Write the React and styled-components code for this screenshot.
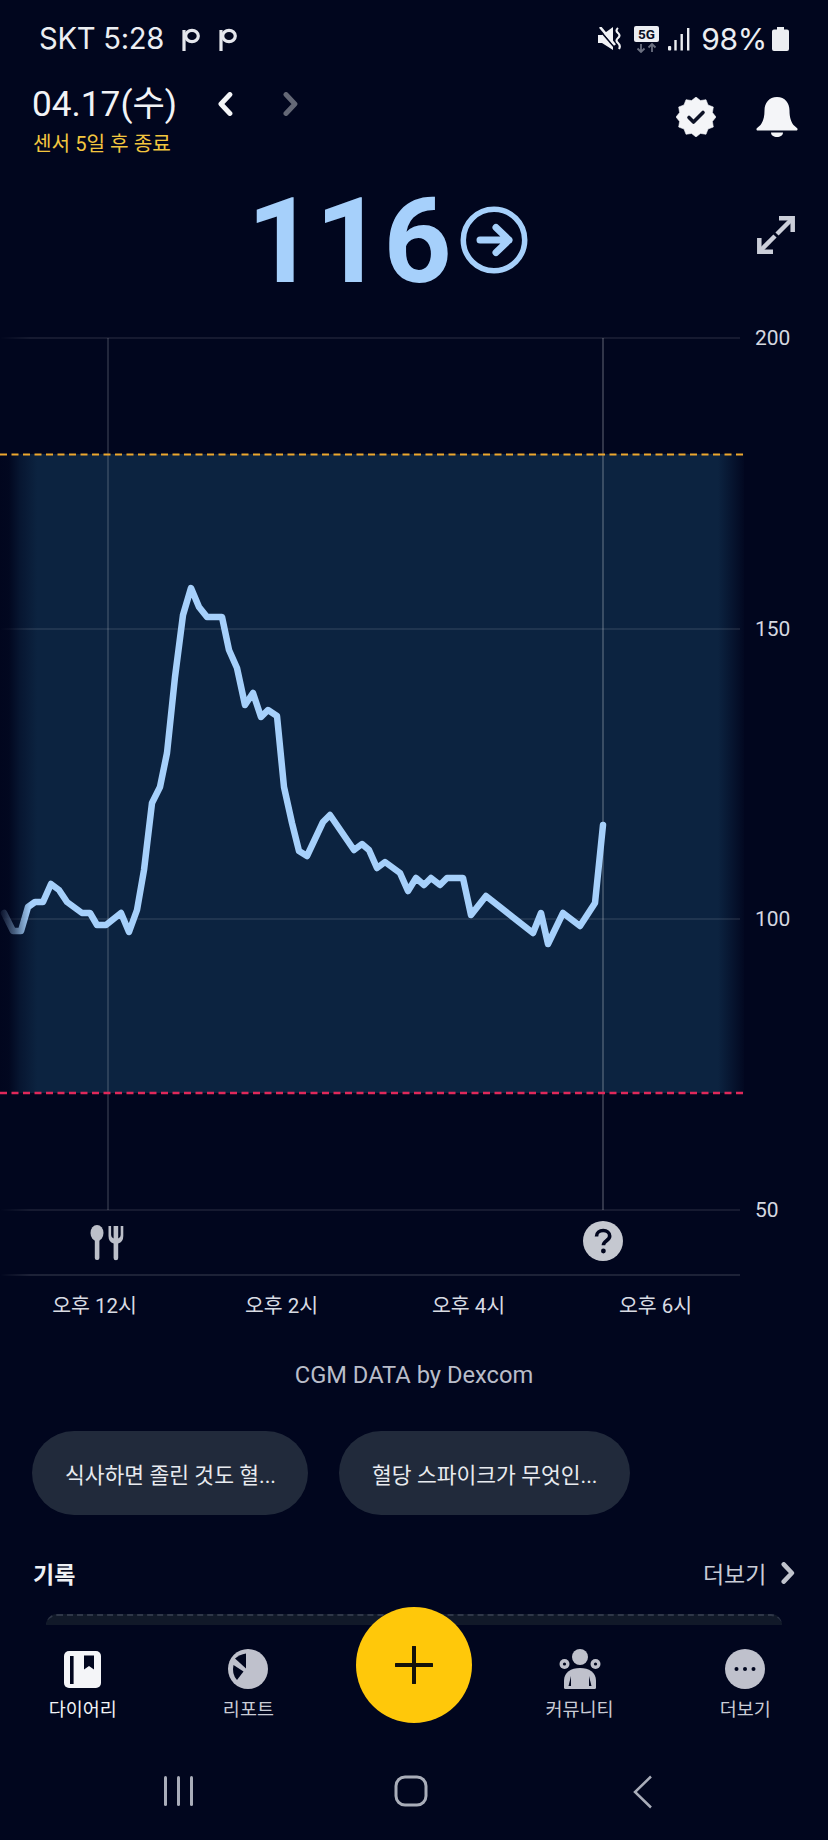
import React from "react";
import styled, { createGlobalStyle } from "styled-components";

const BG = "#01061e";
const BLUE = "#a6d0fb";

const Global = createGlobalStyle`
  html, body { margin: 0; padding: 0; background: ${BG}; }
  body { font-family: Roboto, "Noto Sans CJK KR", sans-serif; }
  * { box-sizing: border-box; }
`;

const Page = styled.div`
  width: 828px;
  height: 1840px;
  overflow: hidden;
  background: ${BG};
  display: flex;
  flex-direction: column;
`;

const StatusBar = styled.div`
  height: 78px;
  padding: 0 39px 0 39px;
  display: flex;
  align-items: center;
  justify-content: space-between;
  color: #eceef2;
  flex: none;
`;
const StatusLeft = styled.div`
  display: flex;
  align-items: center;
  gap: 18px;
`;
const StatusText = styled.span`
  font-family: Inter, sans-serif;
  font-size: ${(p) => p.$size || 29.2}px;
  letter-spacing: -0.3px;
  line-height: 40px;
`;
const StatusRight = styled.div`
  display: flex;
  align-items: center;
`;
const StatusItem = styled.div`
  display: flex;
  margin-left: ${(p) => p.$gap}px;
`;
const NotifyGroup = styled.div`
  display: flex;
  gap: 19px;
  align-items: center;
`;

const Header = styled.header`
  flex: none;
  display: flex;
  justify-content: space-between;
  padding: 4px 30px 0 32px;
  height: 83px;
`;
const DateBlock = styled.div`
  display: flex;
  flex-direction: column;
`;
const DateRow = styled.div`
  display: flex;
  align-items: center;
  height: 44px;
`;
const DateText = styled.div`
  width: 186px;
  font-size: 35.200px;
  font-weight: 400;
  line-height: 44px;
  color: #f2f3f6;
  white-space: nowrap;
`;
const PagerGroup = styled.div`
  display: flex;
  align-items: center;
  gap: 50px;
`;
const SensorNote = styled.div`
  padding-left: 1px;
  font-size: 20.200px;
  line-height: 36px;
  color: #f3c63f;
  white-space: nowrap;
`;
const HeaderActions = styled.div`
  display: flex;
  gap: 40px;
  padding-top: 15px;
  align-items: flex-start;
`;

const ValueRow = styled.div`
  flex: none;
  height: 156px;
  padding: 0 33px 0 247px;
  display: flex;
  align-items: center;
`;
const Value = styled.div`
  font-size: 119px;
  font-weight: 700;
  line-height: 156px;
  margin-top: 5px;
  color: ${BLUE};
  margin-right: 8px;
`;
const ArrowSlot = styled.div`
  display: flex;
  margin-top: 1px;
`;
const ExpandSlot = styled.div`
  margin-left: auto;
  display: flex;
  margin-top: -8px;
`;

const ChartWrap = styled.div`
  position: relative;
  flex: none;
  height: 968px;
`;
const ChartSvg = styled.svg`
  display: block;
`;
const AxisLabel = styled.span`
  position: absolute;
  left: 755px;
  top: ${(p) => p.$y - 317 - 13}px;
  font-size: 21px;
  line-height: 26px;
  color: #d5d8e0;
`;

const TimeRow = styled.div`
  flex: none;
  height: 40px;
  padding: 1px 0 0 1px;
  display: grid;
  grid-template-columns: repeat(4, 187px);
`;
const TimeLabel = styled.div`
  text-align: center;
  font-size: 20.500px;
  line-height: 40px;
  color: #d8dbe3;
`;

const Credit = styled.div`
  flex: none;
  margin-top: 30px;
  text-align: center;
  font-size: 23.700px;
  line-height: 40px;
  color: #b9bdc9;
`;

const ChipRow = styled.div`
  flex: none;
  display: flex;
  gap: 31px;
  margin-top: 36px;
  padding-left: 32px;
`;
const Chip = styled.div`
  height: 84px;
  border-radius: 42px;
  background: #212a3b;
  padding: 0 32px 0 33px;
  display: flex;
  align-items: center;
  font-size: 21.500px;
  color: #e8eaef;
  white-space: nowrap;
`;

const SectionHead = styled.div`
  flex: none;
  height: 40px;
  margin-top: 38px;
  padding: 0 33px;
  display: flex;
  align-items: center;
  justify-content: space-between;
`;
const SectionTitle = styled.div`
  font-size: 23px;
  font-weight: 700;
  color: #eef0f4;
`;
const MoreLink = styled.div`
  display: flex;
  align-items: center;
  gap: 15px;
  font-size: 23px;
  color: #c9ccd6;
`;

const PeekCard = styled.div`
  flex: none;
  height: 11px;
  margin: 21px 46px 0 46px;
  background: #111929;
  border-top: 2px dashed #2f3748;
  border-radius: 14px 14px 0 0;
`;

const BottomNav = styled.nav`
  position: relative;
  flex: none;
  height: 130px;
  display: grid;
  grid-template-columns: repeat(5, 1fr);
  background: ${BG};
`;
const NavItem = styled.div`
  display: flex;
  flex-direction: column;
  align-items: center;
  padding-top: 24px;
  gap: 9px;
`;
const NavIconBox = styled.div`
  width: 44px;
  height: 40px;
  display: flex;
  align-items: center;
  justify-content: center;
`;
const NavLabel = styled.div`
  font-size: 18.500px;
  line-height: 24px;
  color: ${(p) => (p.$active ? "#f2f3f6" : "#c9ccd6")};
`;
const PlusButton = styled.button`
  position: absolute;
  left: 356px;
  top: -18px;
  width: 116px;
  height: 116px;
  padding: 0;
  border: none;
  border-radius: 50%;
  background: #ffc80a;
  display: flex;
  align-items: center;
  justify-content: center;
`;

const GestureBar = styled.div`
  flex: none;
  height: 85px;
  padding: 20px 7px 0 0;
  display: grid;
  grid-template-columns: repeat(3, 232px);
  justify-content: center;
  justify-items: center;
`;
const GestureIcon = styled.svg`
  display: block;
`;

/* ---------- chart data ---------- */
const points = [
  [4, 913], [13, 931], [21, 931], [28, 907], [35, 902], [43, 902], [51, 884], [59, 890], [67, 902],
  [82, 913], [90, 913], [97, 925], [106, 925], [121, 913], [129, 932], [137, 910], [144, 870],
  [152, 803], [160, 787], [167, 753], [175, 677], [183, 615], [191, 588], [199, 607], [207, 617],
  [222, 617], [229, 650], [237, 668], [245, 705], [253, 693], [261, 717], [268, 710], [277, 716],
  [284, 787], [292, 823], [299, 851], [307, 856], [323, 822], [330, 815], [354, 850], [362, 844],
  [369, 850], [377, 868], [385, 862], [400, 873], [408, 891], [416, 878], [424, 885], [431, 878],
  [440, 885], [447, 878], [463, 878], [471, 915], [486, 896], [533, 933], [541, 913], [548, 944],
  [563, 913], [580, 926], [595, 903], [603, 825],
];

const gridY = [338, 629, 919, 1210];

function badgePoints(cx, cy, outer, inner, n) {
  const pts = [];
  for (let i = 0; i < n * 2; i++) {
    const r = i % 2 ? inner : outer;
    const a = (Math.PI * i) / n - Math.PI / 2;
    pts.push(`${(cx + r * Math.cos(a)).toFixed(2)},${(cy + r * Math.sin(a)).toFixed(2)}`);
  }
  return pts.join(" ");
}

function Chart() {
  return (
    <ChartSvg width="828" height="968" viewBox="0 317 828 968">
      <defs>
        <linearGradient id="band" x1="0" x2="744" y1="0" y2="0" gradientUnits="userSpaceOnUse">
          <stop offset="0" stopColor="#0c2340" stopOpacity="0" />
          <stop offset="0.012" stopColor="#0c2340" stopOpacity="0.05" />
          <stop offset="0.027" stopColor="#0c2340" stopOpacity="0.55" />
          <stop offset="0.05" stopColor="#0c2340" stopOpacity="1" />
          <stop offset="0.965" stopColor="#0c2340" stopOpacity="1" />
          <stop offset="1" stopColor="#0c2340" stopOpacity="0.08" />
        </linearGradient>
        <linearGradient id="lineFade" x1="0" x2="36" y1="0" y2="0" gradientUnits="userSpaceOnUse">
          <stop offset="0" stopColor={BLUE} stopOpacity="0.05" />
          <stop offset="0.4" stopColor={BLUE} stopOpacity="0.42" />
          <stop offset="0.85" stopColor={BLUE} stopOpacity="1" />
        </linearGradient>
        <linearGradient id="gridFade" x1="0" x2="30" y1="0" y2="0" gradientUnits="userSpaceOnUse">
          <stop offset="0" stopColor="#ffffff" stopOpacity="0" />
          <stop offset="1" stopColor="#ffffff" stopOpacity="1" />
        </linearGradient>
      </defs>
      <rect x="0" y="454" width="744" height="639" fill="url(#band)" />
      {gridY.map((y) => (
        <line key={y} x1="0" x2="740" y1={y} y2={y} stroke="url(#gridFade)" strokeOpacity="0.11" strokeWidth="1.5" />
      ))}
      <line x1="0" x2="740" y1="1275" y2="1275" stroke="url(#gridFade)" strokeOpacity="0.15" strokeWidth="1.5" />
      <line x1="108" x2="108" y1="338" y2="1210" stroke="#ffffff" strokeOpacity="0.18" strokeWidth="1.5" />
      <line x1="603" x2="603" y1="338" y2="1210" stroke="#ffffff" strokeOpacity="0.26" strokeWidth="1.5" />
      <line x1="0" x2="744" y1="454.500" y2="454.500" stroke="#eda72e" strokeWidth="2" strokeDasharray="7 4.500" />
      <line x1="0" x2="744" y1="1093" y2="1093" stroke="#e0285a" strokeWidth="2.500" strokeDasharray="7 4.500" />
      <polyline
        points={points.map((p) => p.join(",")).join(" ")}
        fill="none"
        stroke="url(#lineFade)"
        strokeWidth="6.500"
        strokeLinejoin="round"
        strokeLinecap="round"
      />
      {/* meal icon */}
      <g fill="#bcbfc9">
        <ellipse cx="97" cy="1233" rx="6.500" ry="8" />
        <rect x="94.800" y="1236" width="4.600" height="24" rx="2" />
        <path d="M108.500 1226h2.600v9q0 2.500 2.500 3.400v-12.400h4.600v12.400q2.500-.9 2.500-3.400v-9h2.600v10q0 6-5.100 7.400v14.600a2.300 2.300 0 0 1-4.600 0v-14.600q-5.100-1.400-5.100-7.400z" />
      </g>
      {/* unknown marker */}
      <circle cx="603" cy="1241" r="20" fill="#c5c8d0" />
      <path
        d="M596.500 1236.500c0-3.800 3-6 6.700-6s6.500 2.200 6.500 5.500c0 4.800-6.300 4.800-6.300 9.300"
        fill="none"
        stroke={BG}
        strokeWidth="3.600"
      />
      <circle cx="603.400" cy="1251" r="2.400" fill={BG} />
    </ChartSvg>
  );
}

/* ---------- icons ---------- */
const GlyphP = () => (
  <svg width="18" height="24" viewBox="0 0 18 24">
    <path d="M2 3v21" stroke="#e4e6ec" strokeWidth="3.200" fill="none" />
    <ellipse cx="10" cy="9" rx="6.300" ry="5.600" stroke="#e4e6ec" strokeWidth="3.200" fill="none" />
  </svg>
);
const MuteIcon = () => (
  <svg width="24" height="24" viewBox="0 0 24 24">
    <path d="M0 8h4L15 0v23L4 16H0z" fill="#f1f2f5" />
    <path d="M0 1l17 20" stroke={BG} strokeWidth="1.800" />
    <path d="M2 0l15 18" stroke="#f1f2f5" strokeWidth="2.600" />
    <path d="M20 1q-3 2.500 0 5t0 5q-3 2.500 0 5t1 6" stroke="#f1f2f5" strokeWidth="2.200" fill="none" />
  </svg>
);
const FiveGIcon = () => (
  <svg width="25" height="27" viewBox="0 0 25 27">
    <rect x="0" y="0" width="25" height="16" rx="2" fill="#eceef2" />
    <text x="12.500" y="13" textAnchor="middle" fontFamily="Roboto, sans-serif" fontSize="13.500" fontWeight="700" fill="#0a0f24">5G</text>
    <path d="M7 18v8M3.500 22.500L7 26l3.500-3.500" stroke="#6b7080" strokeWidth="1.800" fill="none" />
    <path d="M18 26v-8M14.500 21.500L18 18l3.500 3.500" stroke="#6b7080" strokeWidth="1.800" fill="none" />
  </svg>
);
const SignalIcon = () => (
  <svg width="22" height="24" viewBox="0 0 22 24" fill="#eceef2">
    <rect x="0" y="19" width="3.200" height="4.500" rx="1" />
    <rect x="6.300" y="13" width="2.400" height="10.500" />
    <rect x="12.500" y="7" width="2.400" height="16.500" />
    <rect x="19" y="1" width="2.400" height="22.500" />
  </svg>
);
const BatteryIcon = () => (
  <svg width="17" height="24" viewBox="0 0 17 24">
    <path d="M5 0h7v2.500h3a2 2 0 0 1 2 2V22a2 2 0 0 1-2 2H2a2 2 0 0 1-2-2V4.500a2 2 0 0 1 2-2h3z" fill="#eceef2" />
  </svg>
);
const Chevron = ({ dir = "left", color = "#f4f5f8", w = 5, size = 24 }) => (
  <svg width={size * 0.62} height={size} viewBox="0 0 15 24">
    <path
      d={dir === "left" ? "M12 2.500L3 12l9 9.500" : "M3 2.500L12 12l-9 9.500"}
      fill="none"
      stroke={color}
      strokeWidth={w}
      strokeLinecap="round"
      strokeLinejoin="round"
    />
  </svg>
);
const BadgeIcon = () => (
  <svg width="40" height="40" viewBox="0 0 40 40">
    <polygon points={badgePoints(20, 20, 20, 17, 12)} fill="#f4f5f8" stroke="#f4f5f8" strokeWidth="0.600" strokeLinejoin="round" />
    <path d="M13 20.500l4.500 4.500 9.500-9.500" fill="none" stroke="#0d1226" strokeWidth="3.600" strokeLinecap="round" strokeLinejoin="round" />
  </svg>
);
const BellIcon = () => (
  <svg width="42" height="40" viewBox="0 0 42 40">
    <path
      d="M21 0c-8 0-12.500 6-12.500 13.500 0 7-1.500 11-4 14.500L.8 31.300c-.8 1-.2 2.200 1 2.200h38.400c1.200 0 1.800-1.200 1-2.200L37.500 28c-2.500-3.500-4-7.500-4-14.500C33.500 6 29 0 21 0z"
      fill="#f4f5f8"
    />
    <path d="M15 35.500h12c0 2.800-2.700 4.500-6 4.500s-6-1.700-6-4.500z" fill="#f4f5f8" />
  </svg>
);
const ArrowCircle = () => (
  <svg width="68" height="68" viewBox="0 0 68 68">
    <circle cx="34" cy="34" r="30.700" fill="none" stroke={BLUE} strokeWidth="5.500" />
    <path d="M20 34h29M36 21.500L49 34 36 46.500" fill="none" stroke={BLUE} strokeWidth="7" strokeLinecap="round" strokeLinejoin="round" />
  </svg>
);
const ExpandIcon = () => (
  <svg width="38" height="38" viewBox="0 0 38 38" fill="none" stroke="#cbced9" strokeWidth="4.500">
    <path d="M20 18L35 3" />
    <path d="M22 2.300h13.700V16" />
    <path d="M18 20L3 35" />
    <path d="M2.300 22v13.700H16" />
  </svg>
);
const DiaryIcon = () => (
  <svg width="37" height="37" viewBox="0 0 37 37">
    <rect width="37" height="37" rx="5" fill="#f4f5f8" />
    <rect x="6" y="5" width="3.600" height="28" fill={BG} />
    <path d="M20 4.500h10v14l-5-3.500-5 3.500z" fill={BG} />
  </svg>
);
const ReportIcon = () => (
  <svg width="40" height="40" viewBox="0 0 40 40">
    <circle cx="20" cy="20" r="20" fill="#bfc1cc" />
    <path d="M7 9.500Q11.500 5.500 18 4.500V19.500z" fill={BG} />
    <path d="M5.500 16L15.500 22.500 9 31Q3.500 25 5.500 16z" fill={BG} />
  </svg>
);
const CommunityIcon = () => (
  <svg width="42" height="40" viewBox="0 0 42 40">
    <circle cx="21" cy="8" r="8" fill="#bfc1cc" />
    <circle cx="5.500" cy="15" r="5" fill="#bfc1cc" />
    <circle cx="5.500" cy="15" r="1.600" fill={BG} />
    <circle cx="36.500" cy="15" r="5" fill="#bfc1cc" />
    <circle cx="36.500" cy="15" r="1.600" fill={BG} />
    <path d="M5 38.500v-7c0-8 7-12.500 16-12.500s16 4.500 16 12.500v7a1.500 1.500 0 0 1-1.500 1.500h-29A1.500 1.500 0 0 1 5 38.500z" fill="#bfc1cc" />
    <path d="M12 27l-2.500 10h2.500zM30 27l2.500 10H30z" fill={BG} />
  </svg>
);
const MoreIcon = () => (
  <svg width="40" height="40" viewBox="0 0 40 40">
    <circle cx="20" cy="20" r="20" fill="#bfc1cc" />
    <circle cx="11.500" cy="20" r="2" fill={BG} />
    <circle cx="20" cy="20" r="2" fill={BG} />
    <circle cx="28.500" cy="20" r="2" fill={BG} />
  </svg>
);

const navItems = [
  { label: "다이어리", icon: <DiaryIcon />, active: true },
  { label: "리포트", icon: <ReportIcon /> },
  { spacer: true },
  { label: "커뮤니티", icon: <CommunityIcon /> },
  { label: "더보기", icon: <MoreIcon /> },
];

export default function App() {
  return (
    <Page>
      <Global />
      <StatusBar>
        <StatusLeft>
          <StatusText>SKT 5:28</StatusText>
          <NotifyGroup>
            <GlyphP />
            <GlyphP />
          </NotifyGroup>
        </StatusLeft>
        <StatusRight>
          <StatusItem $gap={0}><MuteIcon /></StatusItem>
          <StatusItem $gap={12}><FiveGIcon /></StatusItem>
          <StatusItem $gap={9}><SignalIcon /></StatusItem>
          <StatusItem $gap={11}><StatusText $size={30}>98%</StatusText></StatusItem>
          <StatusItem $gap={5}><BatteryIcon /></StatusItem>
        </StatusRight>
      </StatusBar>

      <Header>
        <DateBlock>
          <DateRow>
            <DateText>04.17(수)</DateText>
            <PagerGroup>
              <Chevron dir="left" />
              <Chevron dir="right" color="#646876" />
            </PagerGroup>
          </DateRow>
          <SensorNote>센서 5일 후 종료</SensorNote>
        </DateBlock>
        <HeaderActions>
          <BadgeIcon />
          <BellIcon />
        </HeaderActions>
      </Header>

      <ValueRow>
        <Value>116</Value>
        <ArrowSlot>
          <ArrowCircle />
        </ArrowSlot>
        <ExpandSlot>
          <ExpandIcon />
        </ExpandSlot>
      </ValueRow>

      <ChartWrap>
        <Chart />
        {[200, 150, 100, 50].map((v, i) => (
          <AxisLabel key={v} $y={gridY[i]}>{v}</AxisLabel>
        ))}
      </ChartWrap>

      <TimeRow>
        <TimeLabel>오후 12시</TimeLabel>
        <TimeLabel>오후 2시</TimeLabel>
        <TimeLabel>오후 4시</TimeLabel>
        <TimeLabel>오후 6시</TimeLabel>
      </TimeRow>

      <Credit>CGM DATA by Dexcom</Credit>

      <ChipRow>
        <Chip>식사하면 졸린 것도 혈...</Chip>
        <Chip>혈당 스파이크가 무엇인...</Chip>
      </ChipRow>

      <SectionHead>
        <SectionTitle>기록</SectionTitle>
        <MoreLink>
          더보기
          <Chevron dir="right" color="#c0c3cd" w={5} size={22} />
        </MoreLink>
      </SectionHead>

      <PeekCard />

      <BottomNav>
        {navItems.map((item, i) =>
          item.spacer ? (
            <div key={i} />
          ) : (
            <NavItem key={item.label}>
              <NavIconBox>{item.icon}</NavIconBox>
              <NavLabel $active={item.active}>{item.label}</NavLabel>
            </NavItem>
          )
        )}
        <PlusButton aria-label="추가">
          <svg width="38" height="38" viewBox="0 0 38 38">
            <path d="M19 1v36M1 19h36" stroke="#14120a" strokeWidth="4" strokeLinecap="round" />
          </svg>
        </PlusButton>
      </BottomNav>

      <GestureBar>
        <GestureIcon width="32" height="32" viewBox="0 0 32 32" fill="#a9adb9">
          <rect x="1" y="1" width="3" height="30" rx="1.500" />
          <rect x="14" y="1" width="3" height="30" rx="1.500" />
          <rect x="27" y="1" width="3" height="30" rx="1.500" />
        </GestureIcon>
        <GestureIcon width="34" height="32" viewBox="0 0 34 32" fill="none" stroke="#a9adb9" strokeWidth="3">
          <rect x="2" y="2" width="30" height="28" rx="9" />
        </GestureIcon>
        <GestureIcon width="20" height="34" viewBox="0 0 20 34" fill="none" stroke="#a9adb9" strokeWidth="2.500">
          <path d="M18 1.500L2 17l16 15.500" />
        </GestureIcon>
      </GestureBar>
    </Page>
  );
}
